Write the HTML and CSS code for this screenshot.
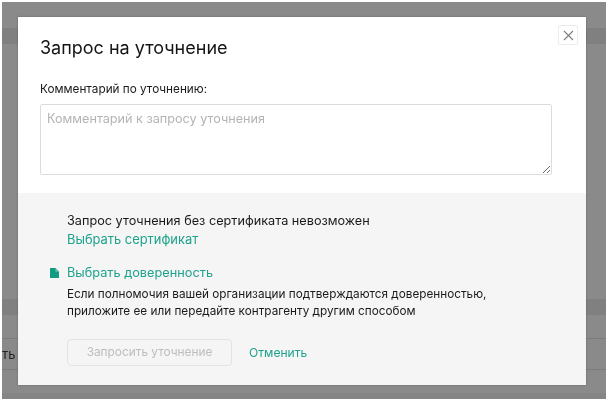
FILE: index.html
```html
<!DOCTYPE html>
<html lang="ru">
<head>
<meta charset="utf-8">
<title>Запрос на уточнение</title>
<link rel="stylesheet" href="styles.css">
</head>
<body>
<div class="screen">
  <div class="backdrop">
    <div class="bg-band bg-top"></div>
    <div class="bg-band bg-mid"></div>
    <div class="bg-row"><span class="bg-text">ть</span></div>
    <div class="bg-band bg-foot"></div>
  </div>
  <div class="modal">
    <button class="close" aria-label="Закрыть">
      <svg width="11" height="11" viewBox="0 0 11 11"><path d="M1 1l9 9M10 1l-9 9" stroke="#7d7d7d" stroke-width="1.1" fill="none"/></svg>
    </button>
    <section class="top">
      <h1 class="title">Запрос на уточнение</h1>
      <label class="label">Комментарий по уточнению:</label>
      <textarea class="input" placeholder="Комментарий к запросу уточнения"></textarea>
    </section>
    <section class="bottom">
      <p class="line">Запрос уточнения без сертификата невозможен</p>
      <a class="link link-cert">Выбрать сертификат</a>
      <div class="attorney">
        <svg class="doc" width="9" height="10" viewBox="0 0 9 10"><path d="M0 0h5.5L9 3.5V10H0z" fill="#129b83"/><path d="M5.5 0.5V3.5H8.5" fill="#7fcfbf"/></svg>
        <a class="link link-attorney">Выбрать доверенность</a>
      </div>
      <p class="note">Если полномочия вашей организации подтверждаются доверенностью,<br>приложите ее или передайте контрагенту другим способом</p>
      <div class="actions">
        <button class="submit" disabled>Запросить уточнение</button>
        <a class="link link-cancel">Отменить</a>
      </div>
    </section>
  </div>
</div>
</body>
</html>
```
FILE: styles.css
```css
* { box-sizing: border-box; }
html, body { margin: 0; padding: 0; }
body { width: 608px; height: 401px; background: #fff; overflow: hidden; font-family: "Inter", "Liberation Sans", sans-serif; }
.screen { position: relative; width: 608px; height: 401px; padding: 2px 2px 2px 2px; filter: blur(0.35px); }
.backdrop { position: relative; width: 604px; height: 397px; background: #8a8a8a; overflow: hidden; }
.bg-band { position: absolute; left: 0; right: 0; background: #808080; }
.bg-top { top: 26px; height: 16px; }
.bg-mid { top: 297px; height: 16px; }
.bg-foot { top: 391px; height: 6px; background: #858585; }
.bg-row { position: absolute; left: 0; top: 336px; width: 100%; height: 32px; border-top: 1px solid #7b7b7b; border-bottom: 1px solid #7b7b7b; font-size: 13px; line-height: 30px; color: #222; }
.modal { position: absolute; left: 18px; top: 17px; width: 568px; height: 368px; display: flex; flex-direction: column; background: #f5f5f5; box-shadow: 0 0 2px rgba(0,0,0,.25); }
.close { position: absolute; right: 8px; top: 8px; width: 20px; height: 20px; padding: 0; display: flex; align-items: center; justify-content: center; background: #fff; border: 1px solid #ececec; border-radius: 2px; }
.top { height: 176px; background: #fff; padding: 20px 22px 0; display: flex; flex-direction: column; }
.title { margin: 0; font-size: 18px; line-height: 22px; font-weight: 400; color: #141414; }
.label { margin-top: 21px; font-size: 11.75px; line-height: 18px; color: #1a1a1a; }
.input { margin-top: 6px; width: 512px; height: 71px; padding: 5px 6px; border: 1px solid #dcdcdc; border-radius: 2px; font: inherit; font-size: 12.65px; line-height: 18px; outline: none; }
.input::placeholder { color: #b4b4b4; }
.bottom { flex: 1; padding: 19px 0 0 49px; font-size: 12.7px; line-height: 17px; color: #1a1a1a; }
.line, .note { margin: 0; }
.link { display: block; color: #1fa28c; }
.link-cert { margin-top: 2px; font-size: 12.9px; }
.link-attorney { font-size: 12.75px; }
.link-cancel { font-size: 12.1px; }
.attorney { position: relative; margin-top: 16px; }
.doc { position: absolute; left: -17px; top: 4px; }
.note { margin-top: 5px; font-size: 11.75px; }
.actions { display: flex; align-items: center; gap: 17px; margin-top: 19px; }
.submit { width: 165px; height: 27px; padding: 0; background: #f5f5f5; border: 1px solid #e3e3e3; border-radius: 4px; color: #bdbdbd; font: inherit; font-size: 11.85px; }
```
